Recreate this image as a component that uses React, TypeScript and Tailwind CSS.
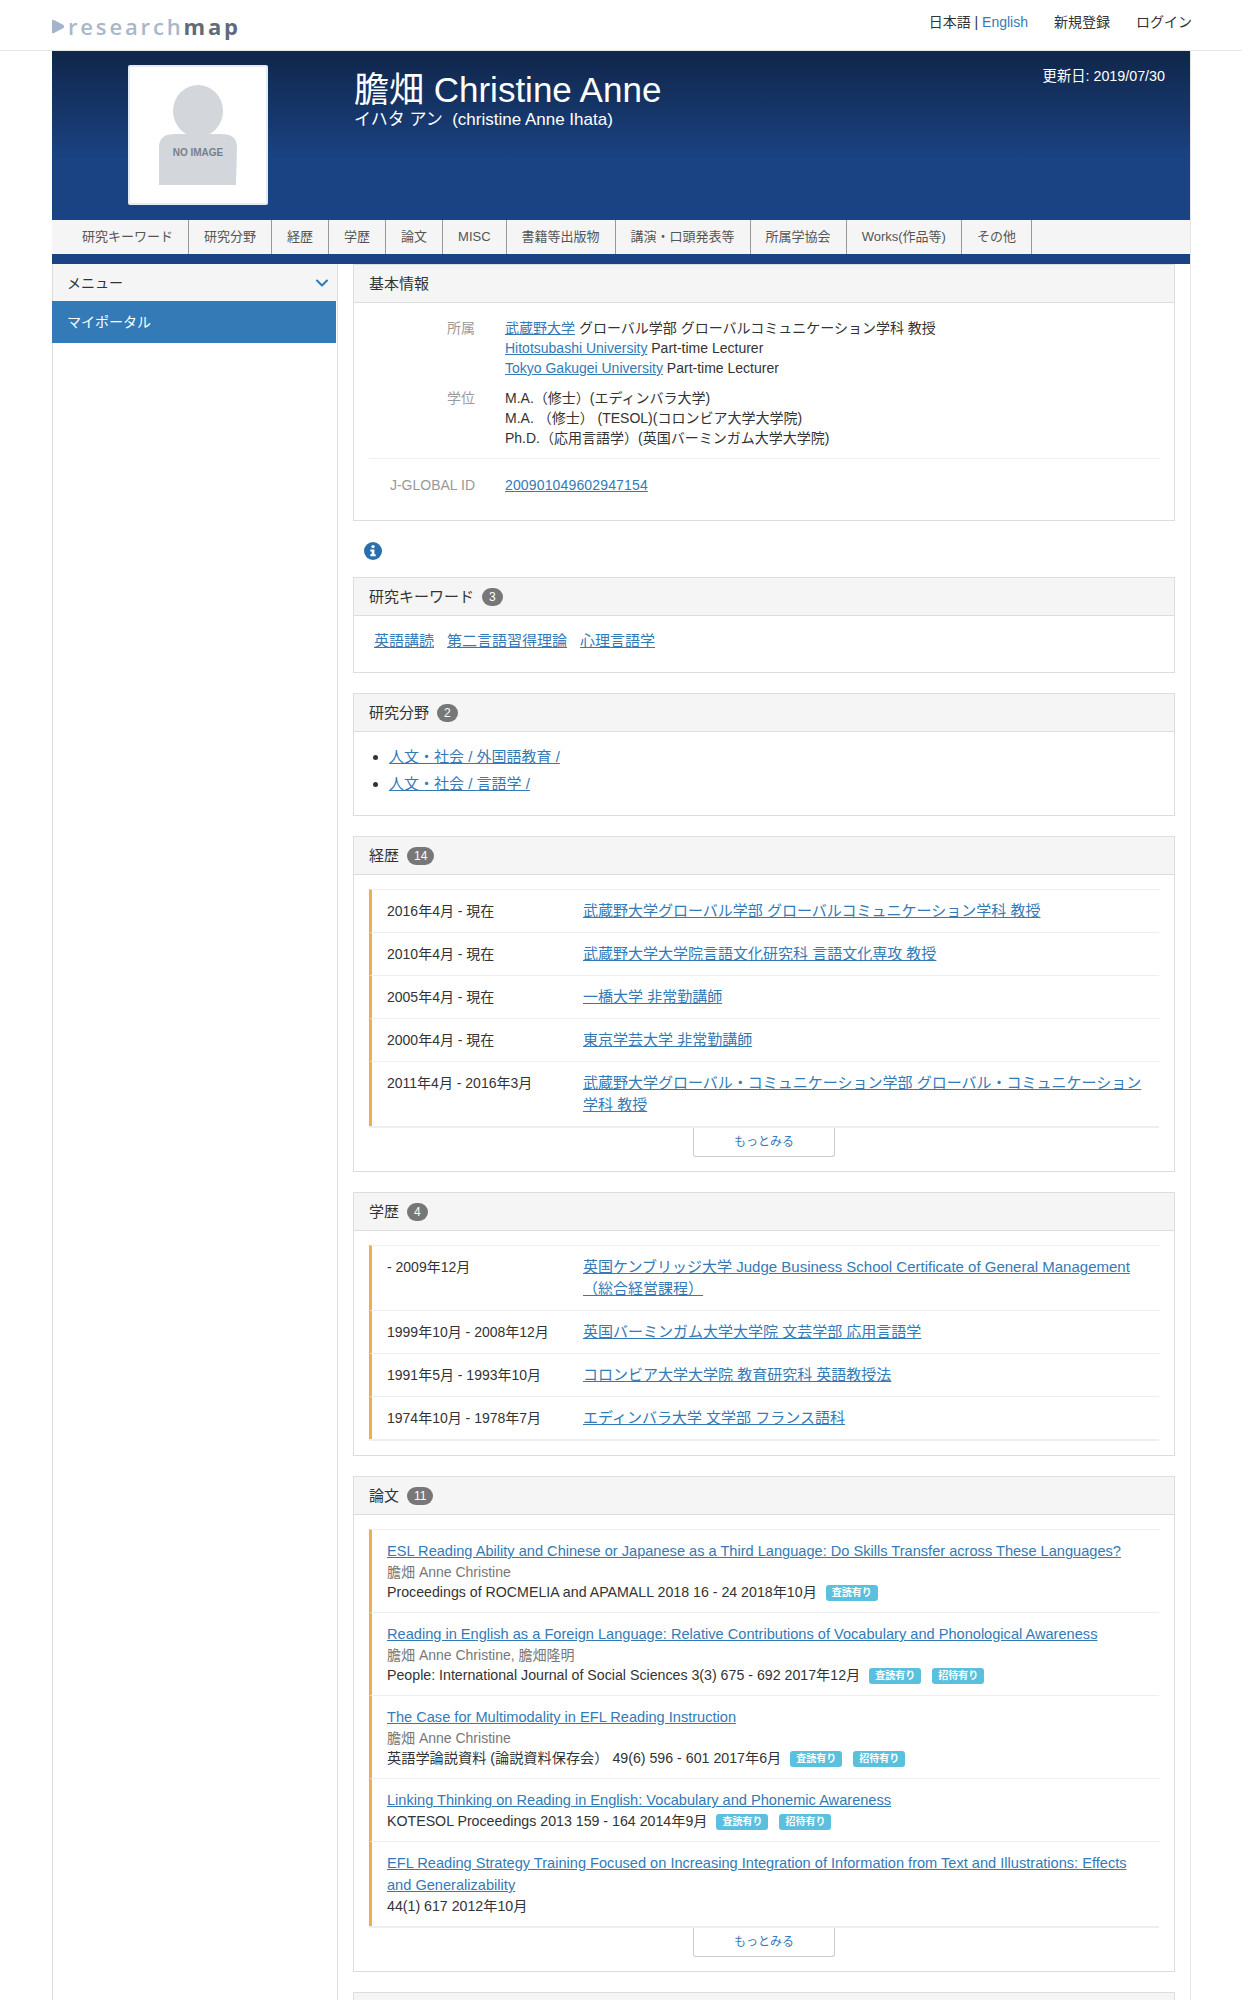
import { ChevronDown } from "lucide-react";
import type { ReactNode } from "react";

const tabs = ["研究キーワード", "研究分野", "経歴", "学歴", "論文", "MISC", "書籍等出版物", "講演・口頭発表等", "所属学協会", "Works(作品等)", "その他"];

const careers = [
    { date: "2016年4月 - 現在", title: "武蔵野大学グローバル学部 グローバルコミュニケーション学科 教授" },
    { date: "2010年4月 - 現在", title: "武蔵野大学大学院言語文化研究科 言語文化専攻 教授" },
    { date: "2005年4月 - 現在", title: "一橋大学 非常勤講師" },
    { date: "2000年4月 - 現在", title: "東京学芸大学 非常勤講師" },
    { date: "2011年4月 - 2016年3月", title: "武蔵野大学グローバル・コミュニケーション学部 グローバル・コミュニケーション学科 教授" },
];

const education = [
    { date: "- 2009年12月", title: "英国ケンブリッジ大学 Judge Business School Certificate of General Management（総合経営課程）" },
    { date: "1999年10月 - 2008年12月", title: "英国バーミンガム大学大学院 文芸学部 応用言語学" },
    { date: "1991年5月 - 1993年10月", title: "コロンビア大学大学院 教育研究科 英語教授法" },
    { date: "1974年10月 - 1978年7月", title: "エディンバラ大学 文学部 フランス語科" },
];

const papers = [
    {
        title: "ESL Reading Ability and Chinese or Japanese as a Third Language: Do Skills Transfer across These Languages?",
        authors: "膽畑 Anne Christine",
        source: "Proceedings of ROCMELIA and APAMALL 2018 16 - 24 2018年10月",
        labels: ["査読有り"],
    },
    {
        title: "Reading in English as a Foreign Language: Relative Contributions of Vocabulary and Phonological Awareness",
        authors: "膽畑 Anne Christine, 膽畑隆明",
        source: "People: International Journal of Social Sciences 3(3) 675 - 692 2017年12月",
        labels: ["査読有り", "招待有り"],
    },
    {
        title: "The Case for Multimodality in EFL Reading Instruction",
        authors: "膽畑 Anne Christine",
        source: "英語学論説資料 (論説資料保存会） 49(6) 596 - 601 2017年6月",
        labels: ["査読有り", "招待有り"],
    },
    {
        title: "Linking Thinking on Reading in English: Vocabulary and Phonemic Awareness",
        source: "KOTESOL Proceedings 2013 159 - 164 2014年9月",
        labels: ["査読有り", "招待有り"],
    },
    {
        title: "EFL Reading Strategy Training Focused on Increasing Integration of Information from Text and Illustrations: Effects and Generalizability",
        source: "44(1) 617 2012年10月",
        labels: [],
    },
];

const Link = ({ children }: { children: ReactNode }) => (
    <a href="#" className="text-[#337ab7] underline">{children}</a>
);

const Panel = ({ title, count, children }: { title?: string; count?: number; children: ReactNode }) => (
    <section className="border border-[#dddddd] mb-[20px] bg-white">
        <div className="h-[38px] bg-[#f5f5f5] border-b border-[#dddddd] px-[15px] flex items-center gap-[8px] text-[15px] text-[#333333]">
            <span>{title}</span>
            {count !== undefined && (
                <span className="bg-[#777777] text-white text-[12px] leading-none rounded-[10px] px-[7px] py-[3px]">{count}</span>
            )}
        </div>
        {children}
    </section>
);

const MoreButton = () => (
    <div className="flex justify-center">
        <button className="w-[142px] h-[29px] bg-white border border-[#cccccc] border-t-0 rounded-b-[3px] text-[12px] text-[#337ab7]">もっとみる</button>
    </div>
);

const HistoryList = ({ items }: { items: { date: string; title: string }[] }) => (
    <ul className="border-b-2 border-[#eeeeee]">
        {items.map((item) => (
            <li key={item.title} className="flex border-l-[3px] border-[#f0ad4e] border-t border-t-[#eeeeee] pl-[15px] pr-[15px] py-[10px] leading-[22px]">
                <span className="w-[196px] shrink-0 text-[#333333]">{item.date}</span>
                <span className="flex-1 text-[15px]"><Link>{item.title}</Link></span>
            </li>
        ))}
    </ul>
);

const Label = ({ children }: { children: ReactNode }) => (
    <span className="inline-block bg-[#5bc0de] text-white text-[10px] leading-[10px] font-bold rounded-[3px] px-[6px] py-[3px] ml-[11px] first:ml-[9px] align-middle">{children}</span>
);

const NoImage = () => (
    <div className="w-[140px] h-[140px] mt-[14px] self-start bg-white border-2 border-[#e4ebf3] rounded-[2px] flex items-center justify-center">
        <svg width="78" height="100" viewBox="0 0 78 100">
            <ellipse cx="39" cy="26" rx="25" ry="26" fill="#d3d7db" />
            <path d="M0 100 L0 62 Q0 49 16 49 L62 49 Q78 49 78 62 L77 100 Z" fill="#d3d7db" />
            <text x="39" y="71" textAnchor="middle" fontSize="10" fontWeight="700" fill="#77808a" fontFamily="'Liberation Sans', sans-serif">NO IMAGE</text>
        </svg>
    </div>
);

export default function App() {
    return (
        <div className="h-[2000px] overflow-hidden bg-white text-[14px] leading-[20px] text-[#333333] font-['Liberation_Sans','Noto_Sans_CJK_JP',sans-serif]">
            {/* top bar */}
            <header className="h-[51px] border-b border-[#e7e7e7] pl-[52px] pr-[50px] flex justify-between">
                <div className="flex items-center gap-[3px] pt-[2px]">
                    <svg width="13" height="15" viewBox="0 0 13 15"><path d="M0 2 Q0 0 2 1 L11.5 6 Q13 7.5 11.5 9 L2 14 Q0 15 0 13 Z" fill="#a5b2cb" /></svg>
                    <span className="text-[22px] font-semibold tracking-[2.85px] text-[#a9b7c9] font-['Open_Sans',sans-serif]">research<span className="font-bold text-[#5f6b78]">map</span></span>
                </div>
                <nav className="flex items-start gap-[26px] pt-[12px]">
                    <span>日本語 | <span className="text-[#337ab7]">English</span></span>
                    <span>新規登録</span>
                    <span>ログイン</span>
                </nav>
            </header>

            <div className="w-[1139px] ml-[52px] border-r border-[#e5e5e5]">
                {/* profile header */}
                <div className="h-[169px] bg-gradient-to-b from-[#10264a] to-[#1a4384] to-[65%] flex text-white">
                    <div className="w-[76px]" />
                    <NoImage />
                    <div className="ml-[86px] flex-1 pt-[19px]">
                        <h1 className="text-[35px] leading-[40px]">膽畑 Christine Anne</h1>
                        <p className="text-[17px] leading-[20px]">イハタ アン&nbsp;&nbsp;(christine Anne Ihata)</p>
                    </div>
                    <div className="pt-[15px] pr-[25px] text-[14.3px]">更新日: 2019/07/30</div>
                </div>

                {/* tabs */}
                <nav className="h-[44px] bg-[#1a4384] pb-[10px]">
                    <div className="h-[34px] bg-[#f5f5f5] pl-[15px] flex">
                        {tabs.map((tab) => (
                            <div key={tab} className="px-[15px] flex items-center border-r border-[#999999] text-[13px] text-[#555555]">{tab}</div>
                        ))}
                    </div>
                </nav>

                <div className="flex">
                    {/* sidebar */}
                    <aside className="w-[286px] h-[1736px] shrink-0 border-l border-r border-[#dddddd]">
                        <div className="h-[37px] bg-[#f5f5f5] pl-[14px] pr-[5px] flex items-center justify-between">
                            <span>メニュー</span>
                            <ChevronDown size={20} strokeWidth={2.5} className="text-[#337ab7]" />
                        </div>
                        <div className="h-[42px] w-[284px] -ml-px bg-[#337ab7] text-white pl-[15px] flex items-center">マイポータル</div>
                    </aside>

                    {/* main column */}
                    <main className="flex-1 pl-[15px] pr-[15px]">
                        <Panel title="基本情報">
                            <div className="px-[15px] pt-[15px] pb-[25px]">
                                <dl className="grid grid-cols-[106px_1fr] gap-x-[30px] gap-y-[10px] pb-[10px] border-b border-[#eeeeee]">
                                    <dt className="text-right text-[#999999]">所属</dt>
                                    <dd>
                                        <div><Link>武蔵野大学</Link> グローバル学部 グローバルコミュニケーション学科 教授</div>
                                        <div><Link>Hitotsubashi University</Link> Part-time Lecturer</div>
                                        <div><Link>Tokyo Gakugei University</Link> Part-time Lecturer</div>
                                    </dd>
                                    <dt className="text-right text-[#999999]">学位</dt>
                                    <dd>
                                        <div>M.A.（修士）(エディンバラ大学)</div>
                                        <div>M.A. （修士） (TESOL)(コロンビア大学大学院)</div>
                                        <div>Ph.D.（応用言語学）(英国バーミンガム大学大学院)</div>
                                    </dd>
                                </dl>
                                <dl className="grid grid-cols-[106px_1fr] gap-x-[30px] pt-[16px]">
                                    <dt className="text-right text-[#999999]">J-GLOBAL ID</dt>
                                    <dd className="tracking-[0.15px]"><Link>200901049602947154</Link></dd>
                                </dl>
                            </div>
                        </Panel>

                        <div className="h-[36px] pl-[11px] pt-[1px]">
                            <svg width="18" height="18" viewBox="0 0 18 18">
                                <circle cx="9" cy="9" r="9" fill="#2a6fab" />
                                <circle cx="9" cy="4.6" r="1.7" fill="#fff" />
                                <path d="M6.3 7.4 H10.4 V12.2 H11.7 V14.2 H6.3 V12.2 H7.7 V9.4 H6.3 Z" fill="#fff" />
                            </svg>
                        </div>

                        <Panel title="研究キーワード" count={3}>
                            <div className="px-[20px] pt-[15px] pb-[20px] h-[56px] flex gap-[13px] text-[15px]">
                                <Link>英語講読</Link>
                                <Link>第二言語習得理論</Link>
                                <Link>心理言語学</Link>
                            </div>
                        </Panel>

                        <Panel title="研究分野" count={2}>
                            <ul className="list-disc pl-[35px] pt-[15px] pb-[21px] space-y-[7px] text-[15px]">
                                <li><Link>人文・社会 / 外国語教育 /</Link></li>
                                <li><Link>人文・社会 / 言語学 /</Link></li>
                            </ul>
                        </Panel>

                        <Panel title="経歴" count={14}>
                            <div className="px-[15px] pt-[14px] pb-[14px]">
                                <HistoryList items={careers} />
                                <MoreButton />
                            </div>
                        </Panel>

                        <Panel title="学歴" count={4}>
                            <div className="px-[15px] pt-[14px] pb-[14px]">
                                <HistoryList items={education} />
                            </div>
                        </Panel>

                        <Panel title="論文" count={11}>
                            <div className="px-[15px] pt-[14px] pb-[14px]">
                                <ul className="border-b-2 border-[#eeeeee]">
                                    {papers.map((paper) => (
                                        <li key={paper.title} className="border-l-[3px] border-[#f0ad4e] border-t border-t-[#eeeeee] px-[15px] py-[10px] leading-[20px]">
                                            <div className="leading-[22px] text-[14.6px]"><Link>{paper.title}</Link></div>
                                            {paper.authors && <div className="text-[#777777]">{paper.authors}</div>}
                                            <div className="text-[14.2px]">
                                                {paper.source}
                                                {paper.labels.map((label) => <Label key={label}>{label}</Label>)}
                                            </div>
                                        </li>
                                    ))}
                                </ul>
                                <MoreButton />
                            </div>
                        </Panel>

                        {/* next panel only peeks in at the bottom edge */}
                        <Panel>
                            <div className="h-[40px]" />
                        </Panel>
                    </main>
                </div>
            </div>
        </div>
    );
}
